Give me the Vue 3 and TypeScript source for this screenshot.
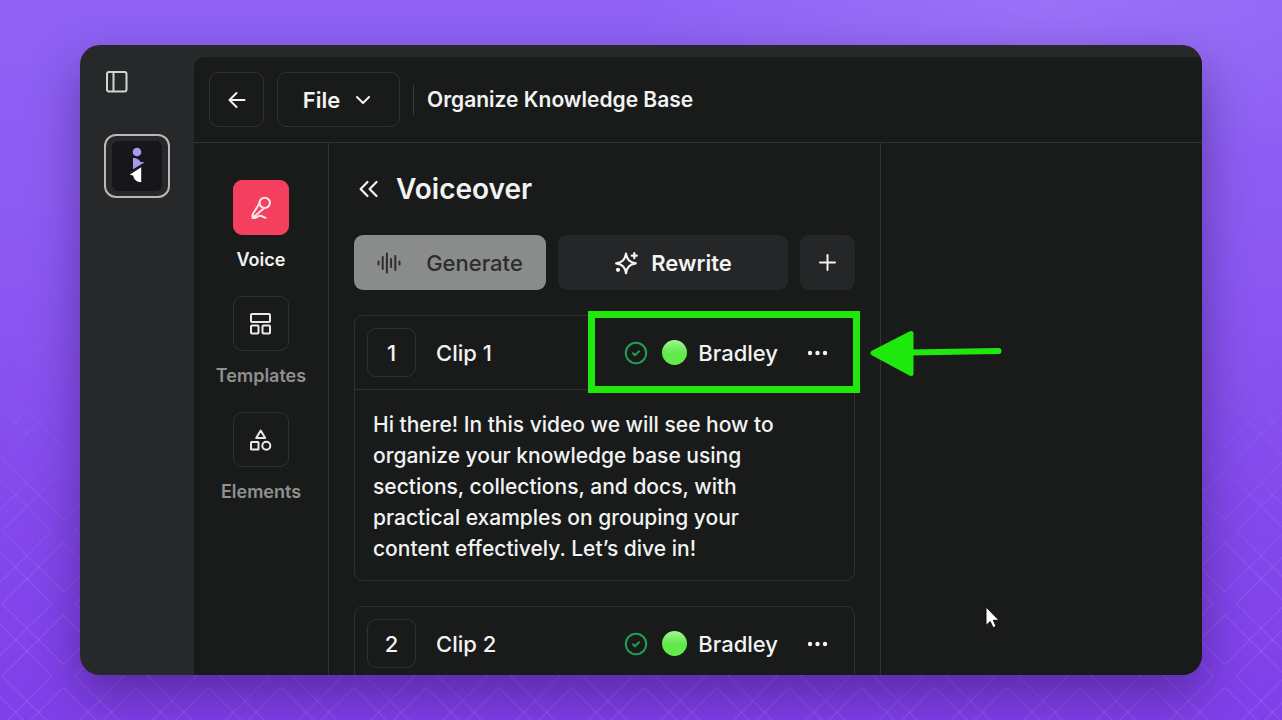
<script setup lang="ts">
interface Clip {
  id: number
  title: string
  voice: string
  script: string
  highlighted: boolean
}

interface Tool {
  key: string
  label: string
  active: boolean
}

const tools: Tool[] = [
  { key: 'voice', label: 'Voice', active: true },
  { key: 'templates', label: 'Templates', active: false },
  { key: 'elements', label: 'Elements', active: false },
]

const clips: Clip[] = [
  {
    id: 1,
    title: 'Clip 1',
    voice: 'Bradley',
    script:
      'Hi there! In this video we will see how to organize your knowledge base using sections, collections, and docs, with practical examples on grouping your content effectively. Let’s dive in!',
    highlighted: true,
  },
  { id: 2, title: 'Clip 2', voice: 'Bradley', script: '', highlighted: false },
]

const tileSize = 72.6
const offsets = [-tileSize, 0, tileSize]
</script>

<template>
  <div class="stage">
    <svg class="backdrop" aria-hidden="true">
      <defs>
        <pattern id="lattice" x="27" y="422" :width="tileSize" :height="tileSize" patternUnits="userSpaceOnUse">
          <template v-for="dx in offsets" :key="dx">
            <path
              v-for="dy in offsets"
              :key="dy"
              :transform="`translate(${dx} ${dy})`"
              d="M36.3 -25 97.3 36.3 36.3 97.3 -24.7 36.3Z"
              fill="none"
              stroke="#fff"
              stroke-opacity="0.12"
            />
          </template>
        </pattern>
      </defs>
      <rect width="100%" height="100%" fill="url(#lattice)" />
    </svg>

    <div class="window">
      <aside class="rail">
        <button class="rail-toggle" type="button" aria-label="Toggle sidebar">
          <svg width="22" height="22" viewBox="0 0 22 22" fill="none" stroke="currentColor" stroke-width="2">
            <rect x="1" y="1" width="19.500" height="19.500" rx="2" />
            <path d="M7.500 1v19.500" />
          </svg>
        </button>
        <button class="workspace" type="button" aria-label="Workspace">
          <svg width="50" height="50" viewBox="0 0 50 50">
            <rect width="50" height="50" rx="6" fill="#17171b" />
            <circle cx="25" cy="11" r="4.300" fill="#a898f2" />
            <path d="M21 16.700c4 .3 6.500 2 7.700 4.300l4 .3L21 28.300Z" fill="#a898f2" />
            <path d="M29.200 26.300v15c-4.500-.3-7.700-3-8-6.800l-3.500-.8Z" fill="#fff" />
          </svg>
        </button>
      </aside>

      <main class="editor">
        <header class="topbar">
          <button class="outline square" type="button" aria-label="Back">
            <svg width="18" height="18" viewBox="0 0 18 18" fill="none" stroke="currentColor" stroke-width="2" stroke-linecap="round" stroke-linejoin="round">
              <path d="M16.500 9H1.500M8.500 2 1.500 9l7 7" />
            </svg>
          </button>
          <button class="outline file" type="button">
            File
            <svg width="14" height="10" viewBox="0 0 14 10" fill="none" stroke="currentColor" stroke-width="2" stroke-linecap="round" stroke-linejoin="round">
              <path d="M1 2l6 6 6-6" />
            </svg>
          </button>
          <span class="divider"></span>
          <h1 class="doc-title">Organize Knowledge Base</h1>
        </header>

        <div class="body">
          <nav class="tools">
            <button v-for="tool in tools" :key="tool.key" type="button" class="tool" :class="{ active: tool.active }">
              <span class="tile">
                <svg v-if="tool.key === 'voice'" width="24" height="24" viewBox="0 0 24 24" fill="none" stroke="currentColor" stroke-width="2" stroke-linecap="round" stroke-linejoin="round">
                  <circle cx="15.700" cy="6.900" r="5.200" />
                  <path d="M10.600 7.300 4 17.800c-.6 1.200-.7 2.700-.3 4.200M15 12.200l-7.600 6.600C5.800 20 4.600 21 3.700 22c3 .8 4.800-1.800 7.300-2.200 2.200-.2 3 1.700 5.500 1.900" />
                </svg>
                <svg v-else-if="tool.key === 'templates'" width="22" height="22" viewBox="0 0 22 22" fill="none" stroke="currentColor" stroke-width="2" stroke-linejoin="round">
                  <rect x="1" y="1" width="19" height="8" rx="1" />
                  <rect x="1" y="12.500" width="7.500" height="8" rx="1" />
                  <rect x="12.500" y="12.500" width="7.500" height="8" rx="1" />
                </svg>
                <svg v-else width="22" height="22" viewBox="0 0 22 22" fill="none" stroke="currentColor" stroke-width="2" stroke-linejoin="round">
                  <path d="M10.700 1.500 15.200 9H6.200Z" />
                  <rect x="1" y="13" width="7.500" height="7.500" rx="0.500" />
                  <circle cx="16.300" cy="16.700" r="4" />
                </svg>
              </span>
              <span class="tool-label">{{ tool.label }}</span>
            </button>
          </nav>

          <section class="panel">
            <div class="panel-head">
              <button class="bare" type="button" aria-label="Collapse panel">
                <svg width="20" height="18" viewBox="0 0 20 18" fill="none" stroke="currentColor" stroke-width="2.200" stroke-linecap="round" stroke-linejoin="round">
                  <path d="M8.500 2 1.600 9l6.900 7M17.500 2 10.600 9l6.900 7" />
                </svg>
              </button>
              <h2>Voiceover</h2>
            </div>

            <div class="actions">
              <button class="action generate" type="button" disabled>
                <svg width="24" height="22" viewBox="0 0 24 22" fill="none" stroke="currentColor" stroke-width="2" stroke-linecap="round">
                  <path d="M1.500 9.500v3M5.700 5v12M9.900 1.500v19M14.100 7v8M18.300 4v14M22.500 9.500v3" />
                </svg>
                Generate
              </button>
              <button class="action rewrite" type="button">
                <svg width="24" height="24" viewBox="0 0 24 24" fill="none" stroke="currentColor" stroke-width="2.200" stroke-linecap="round" stroke-linejoin="round">
                  <path d="M12 2.500c1 6 3.200 8.600 9.800 9.800-6.600 1.200-8.800 3.800-9.800 9.900-1-6.100-3.200-8.700-9.800-9.900C8.800 11.100 11 8.500 12 2.500Z" />
                  <path d="M20.300 2.200v5M17.800 4.700h5" />
                  <circle cx="4" cy="18.800" r="1" fill="currentColor" />
                </svg>
                Rewrite
              </button>
              <button class="action" type="button" aria-label="Add clip">
                <svg width="18" height="18" viewBox="0 0 18 18" fill="none" stroke="currentColor" stroke-width="2" stroke-linecap="round">
                  <path d="M8.500 1v15M1 8.500h15" />
                </svg>
              </button>
            </div>

            <article v-for="clip in clips" :key="clip.id" class="clip">
              <div class="clip-head">
                <span class="clip-number">{{ clip.id }}</span>
                <h3>{{ clip.title }}</h3>
                <svg class="done" width="24" height="24" viewBox="0 0 24 24" fill="none" stroke="currentColor" stroke-width="2" stroke-linecap="round" stroke-linejoin="round">
                  <circle cx="12" cy="12" r="10.200" />
                  <path d="m9 12.300 2 2 4-4" />
                </svg>
                <button class="voice" type="button">
                  <span class="orb"></span>
                  {{ clip.voice }}
                </button>
                <button class="bare" type="button" aria-label="More options">
                  <svg width="22" height="6" viewBox="0 0 22 6" fill="currentColor">
                    <circle cx="4" cy="3" r="2.200" />
                    <circle cx="11.500" cy="3" r="2.200" />
                    <circle cx="19" cy="3" r="2.200" />
                  </svg>
                </button>
              </div>
              <p class="clip-script">{{ clip.script }}</p>
              <div v-if="clip.highlighted" class="callout">
                <svg class="callout-arrow" width="132" height="46" viewBox="0 0 132 46" fill="#1ee80c" stroke="#1ee80c" stroke-linecap="round" stroke-linejoin="round">
                  <path d="M3 23 41 3.500v40Z" stroke-width="5" />
                  <path d="M40 22.500 128.500 21" stroke-width="6" />
                </svg>
              </div>
            </article>
          </section>

          <section class="canvas">
            <svg class="pointer" width="16" height="24" viewBox="0 0 16 24">
              <path d="M1 1v18.500l4.200-4 2.900 6.200 3-1.400-2.800-6H14Z" fill="#fff" stroke="#0c0d0c" stroke-width="1" />
            </svg>
          </section>
        </div>
      </main>
    </div>
  </div>
</template>

<style>
body {
  margin: 0;
}
</style>

<style scoped>
.stage {
  position: relative;
  box-sizing: border-box;
  height: 100vh;
  min-height: 400px;
  padding: 45px 80px;
  overflow: hidden;
  display: flex;
  background:
    radial-gradient(ellipse 420px 180px at 82% 0, rgba(164, 128, 250, 0.5), transparent),
    linear-gradient(#8f62f5 0%, #8c5bf3 30%, #8449ec 70%, #803fe9 100%);
  font-family: Inter, "Liberation Sans", sans-serif;
  font-size: 22px;
  color: #f2f3f2;
}

.backdrop {
  position: absolute;
  inset: 0;
  width: 100%;
  height: 100%;
  -webkit-mask-image: linear-gradient(transparent 42%, #000 85%);
  mask-image: linear-gradient(transparent 42%, #000 85%);
}

.window {
  position: relative;
  flex: 1;
  display: flex;
  min-width: 0;
  overflow: hidden;
  border-radius: 20px;
  background: #27282a;
  box-shadow: 0 20px 48px rgba(20, 5, 50, 0.38);
}

button {
  margin: 0;
  padding: 0;
  border: 0;
  background: none;
  color: inherit;
  font: inherit;
}

h1,
h2,
h3,
p {
  margin: 0;
}

svg {
  display: block;
  flex: none;
}

.rail {
  flex: none;
  box-sizing: border-box;
  width: 114px;
  padding: 26px 24px;
  display: flex;
  flex-direction: column;
  gap: 41px;
}

.rail-toggle {
  align-self: flex-start;
  padding-left: 2px;
  color: #d3d4d4;
}

.workspace {
  box-sizing: border-box;
  width: 66px;
  height: 64px;
  display: grid;
  place-items: center;
  border: 2px solid #b9b9ba;
  border-radius: 12px;
}

.editor {
  flex: 1;
  min-width: 0;
  margin-top: 12px;
  display: flex;
  flex-direction: column;
  border-top-left-radius: 10px;
  background: #191b1a;
}

.topbar {
  display: flex;
  align-items: center;
  gap: 13px;
  padding: 15px;
  border-bottom: 1px solid #323333;
}

.outline {
  box-sizing: border-box;
  height: 55px;
  display: flex;
  align-items: center;
  justify-content: center;
  border: 1px solid #303131;
  border-radius: 9px;
}

.square {
  width: 55px;
}

.file {
  width: 123px;
  gap: 16px;
  padding-right: 4px;
  font-weight: 600;
}

.divider {
  width: 1px;
  height: 30px;
  background: #3a3b3b;
}

.doc-title {
  font-size: 21px;
  font-weight: 600;
  white-space: nowrap;
}

.body {
  flex: 1;
  min-height: 0;
  display: flex;
}

.tools {
  flex: none;
  box-sizing: border-box;
  width: 135px;
  padding-top: 37px;
  display: flex;
  flex-direction: column;
  align-items: center;
  gap: 24px;
  border-right: 1px solid #323333;
}

.tool {
  display: flex;
  flex-direction: column;
  align-items: center;
  gap: 13px;
  color: #8f9090;
}

.tile {
  box-sizing: border-box;
  width: 56px;
  height: 55px;
  display: grid;
  place-items: center;
  border: 1px solid #303131;
  border-radius: 9px;
  color: #e8e9e8;
}

.tool-label {
  font-size: 18px;
  font-weight: 600;
  line-height: 24px;
}

.active {
  color: #f2f3f2;
}

.active .tile {
  border-color: #f43f5e;
  background: #f43f5e;
  color: #ffe9ec;
}

.panel {
  position: relative;
  z-index: 1;
  flex: none;
  box-sizing: border-box;
  width: 552px;
  padding: 28px 25px 0;
  display: flex;
  flex-direction: column;
  gap: 25px;
  border-right: 1px solid #323333;
}

.panel-head {
  display: flex;
  align-items: center;
  gap: 17px;
  height: 36px;
  padding-left: 5px;
}

.panel-head h2 {
  font-size: 28px;
  font-weight: 600;
  line-height: 36px;
}

.actions {
  display: grid;
  grid-template-columns: 192px 1fr 55px;
  gap: 12px;
  margin-top: 3px;
}

.action {
  height: 55px;
  display: flex;
  align-items: center;
  justify-content: center;
  gap: 13px;
  border-radius: 9px;
  background: #252628;
  font-weight: 600;
}

.generate {
  gap: 25px;
  background: #8a8c8b;
  color: #2c2d2d;
  font-weight: 500;
}

.clip {
  position: relative;
  border: 1px solid #303131;
  border-radius: 9px;
}

.clip-head {
  display: flex;
  align-items: center;
  padding: 12px 26px 12px 12px;
  border-bottom: 1px solid #303131;
}

.clip-number {
  box-sizing: border-box;
  width: 49px;
  height: 49px;
  display: grid;
  place-items: center;
  border: 1px solid #303131;
  border-radius: 9px;
  font-weight: 500;
}

.clip-head h3 {
  flex: 1;
  margin-left: 20px;
  font-size: 22px;
  font-weight: 500;
}

.done {
  color: #259a53;
}

.voice {
  display: flex;
  align-items: center;
  gap: 11px;
  margin: 0 28px 0 14px;
  font-weight: 500;
}

.orb {
  width: 25px;
  height: 25px;
  border-radius: 50%;
  background: linear-gradient(#a4f596, #74ec60 35%, #60e948 55%, #64ea4d);
}

.clip-script {
  padding: 19px 48px 16px 18px;
  font-size: 21px;
  font-weight: 500;
  line-height: 31px;
}

.callout {
  position: absolute;
  top: -5px;
  right: -6px;
  box-sizing: border-box;
  width: 272px;
  height: 82px;
  border: 7px solid #1ee80c;
}

.callout-arrow {
  position: absolute;
  top: 12px;
  left: 275px;
}

.canvas {
  position: relative;
  flex: 1;
  min-width: 0;
}

.pointer {
  position: absolute;
  top: 463px;
  left: 104px;
}
</style>
